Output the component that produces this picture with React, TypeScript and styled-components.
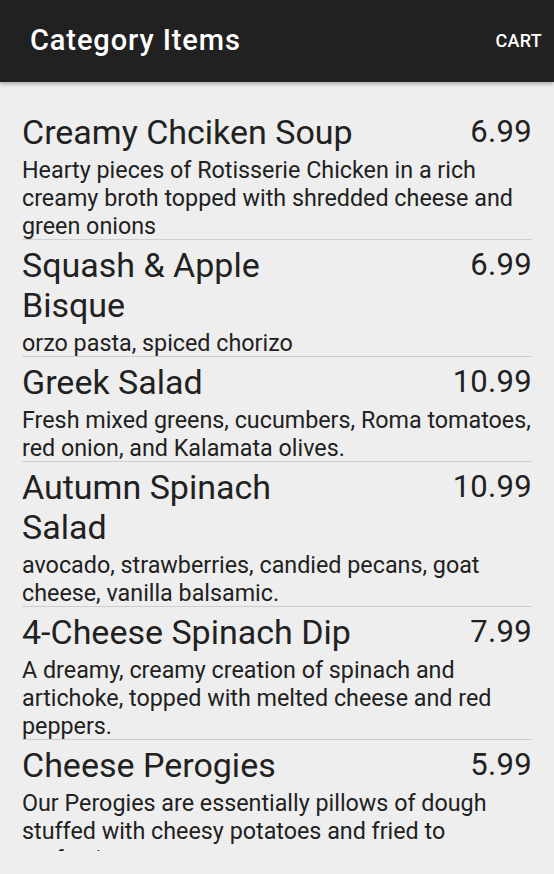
import React from "react";
import styled, { createGlobalStyle } from "styled-components";

const Global = createGlobalStyle`
  html, body { margin: 0; padding: 0; background: #eeeeee; }
  body { font-family: Roboto, "Noto Sans", sans-serif; -webkit-font-smoothing: antialiased; }
  * { box-sizing: border-box; }
`;

const Screen = styled.div`
  width: 554px;
  height: 874px;
  display: flex;
  flex-direction: column;
  background: #eeeeee;
  overflow: hidden;
`;

const AppBar = styled.header`
  height: 82px;
  flex: none;
  background: #212121;
  display: flex;
  align-items: center;
  justify-content: space-between;
  padding: 0 12px 2px 30px;
  box-shadow: 0 2px 4px rgba(0, 0, 0, 0.3);
  position: relative;
  z-index: 1;
`;

const Title = styled.h1`
  margin: 0;
  color: #ffffff;
  font-size: 29px;
  font-weight: 500;
  letter-spacing: 0.9px;
`;

const CartButton = styled.button`
  background: none;
  border: none;
  padding: 0;
  color: #ffffff;
  font-family: Roboto, sans-serif;
  font-size: 18px;
  font-weight: 500;
  letter-spacing: 0.3px;
`;

const Body = styled.main`
  flex: 1;
  display: flex;
  flex-direction: column;
  padding: 30px 22px 23px 22px;
  min-height: 0;
`;

const List = styled.div`
  flex: 1;
  overflow: hidden;
`;

const Item = styled.div<{ $first?: boolean }>`
  border-top: ${(p) => (p.$first ? "none" : "1px solid #cfcfcf")};
  padding-top: ${(p) => (p.$first ? "0" : "5.5px")};
`;

const Row = styled.div`
  display: flex;
  justify-content: space-between;
  align-items: flex-start;
`;

const Name = styled.div`
  width: 336px;
  font-size: 34px;
  line-height: 40px;
  color: #212121;
`;

const Price = styled.div`
  font-size: 31px;
  line-height: 40px;
  color: #212121;
  letter-spacing: 0.3px;
`;

const Desc = styled.div`
  margin-top: 4px;
  margin-bottom: -1.5px;
  font-size: 23.3px;
  line-height: 28px;
  color: #212121;
`;

const items = [
  {
    name: "Creamy Chciken Soup",
    price: "6.99",
    desc: "Hearty pieces of Rotisserie Chicken in a rich creamy broth topped with shredded cheese and green onions",
  },
  { name: "Squash & Apple Bisque", price: "6.99", desc: "orzo pasta, spiced chorizo" },
  {
    name: "Greek Salad",
    price: "10.99",
    desc: "Fresh mixed greens, cucumbers, Roma tomatoes, red onion, and Kalamata olives.",
  },
  {
    name: "Autumn Spinach Salad",
    price: "10.99",
    desc: "avocado, strawberries, candied pecans, goat cheese, vanilla balsamic.",
  },
  {
    name: "4-Cheese Spinach Dip",
    price: "7.99",
    desc: "A dreamy, creamy creation of spinach and artichoke, topped with melted cheese and red peppers.",
  },
  {
    name: "Cheese Perogies",
    price: "5.99",
    desc: "Our Perogies are essentially pillows of dough stuffed with cheesy potatoes and fried to perfection.",
  },
];

export default function App() {
  return (
    <>
      <Global />
      <Screen>
        <AppBar>
          <Title>Category Items</Title>
          <CartButton>CART</CartButton>
        </AppBar>
        <Body>
          <List>
            {items.map((it, i) => (
              <Item key={i} $first={i === 0}>
                <Row>
                  <Name>{it.name}</Name>
                  <Price>{it.price}</Price>
                </Row>
                <Desc>{it.desc}</Desc>
              </Item>
            ))}
          </List>
        </Body>
      </Screen>
    </>
  );
}
